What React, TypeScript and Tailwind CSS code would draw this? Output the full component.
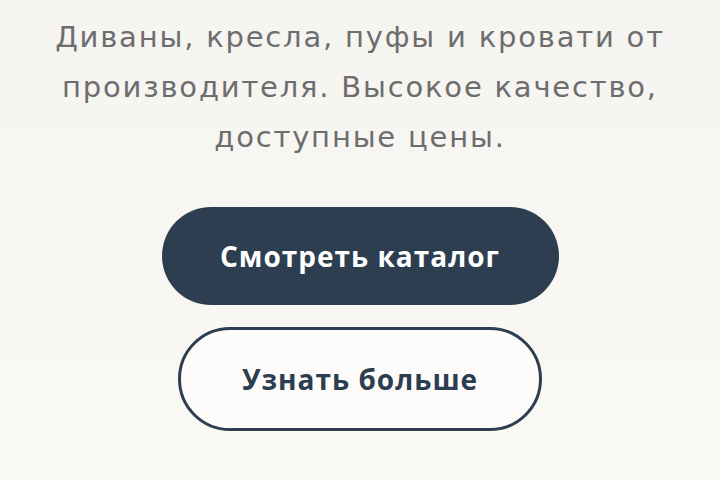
import React from "react";

export default function App() {
  return (
    <div
      className="w-[720px] h-[480px] overflow-hidden bg-gradient-to-b from-[#f5f4f1] to-[#faf9f6] flex flex-col items-center pt-[12px]"
      style={{ fontFamily: '"Open Sans", "Noto Sans", sans-serif' }}
    >
      <p
        className="text-[29px] leading-[50px] text-[#6d6d6d] text-center tracking-[1.8px] w-[710px]"
        style={{ fontFamily: '"DejaVu Sans", "Open Sans", sans-serif' }}
      >
        Диваны, кресла, пуфы и кровати от
        <br />
        производителя. Высокое качество,
        <br />
        доступные цены.
      </p>
      <div className="mt-[45px] flex flex-col items-center gap-[22px]">
        <button className="w-[397px] h-[98px] rounded-full bg-[#2c3e50] text-white text-[28px] font-bold tracking-[1px] flex items-center justify-center">
          Смотреть каталог
        </button>
        <button className="w-[364px] h-[104px] rounded-full border-[3px] border-[#2c3e50] bg-[#fdfcfa] text-[#2c3e50] text-[28px] font-bold tracking-[1px] flex items-center justify-center">
          Узнать больше
        </button>
      </div>
    </div>
  );
}
